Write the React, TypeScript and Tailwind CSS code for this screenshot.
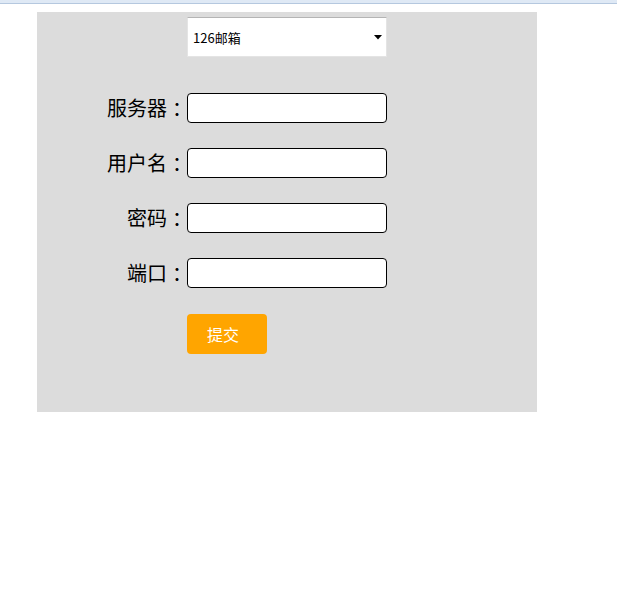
import React from "react";

const font = { fontFamily: '"Noto Sans CJK SC", "Noto Sans", sans-serif' };

function Row({ label }: { label: string }) {
  return (
    <div className="flex items-center h-[30px]">
      <div className="w-[150px] text-right text-[20px] leading-[30px] text-black whitespace-nowrap">
        {label}
        <span className="inline-block pl-[5px] mr-[-5px]">：</span>
      </div>
      <div className="w-[200px] h-[30px] bg-white border border-black rounded-[4px]" />
    </div>
  );
}

export default function App() {
  return (
    <div className="w-[617px] h-[611px] bg-white" style={font}>
      <div className="h-[4px] bg-[#dfe9f5] border-b border-[#b5c8df]" />
      <div className="ml-[37px] mt-[8px] w-[500px] h-[400px] bg-[#dcdcdc] pt-[5px]">
        <div className="ml-[150px] w-[200px] h-[40px] bg-white border border-[#e4e4e4] border-t-[#b4b4b4] flex items-center justify-between pl-[5px] pr-[4px]">
          <span className="text-[13px] text-black leading-none">126邮箱</span>
          <svg width="8" height="5" viewBox="0 0 8 5" className="mt-[1px]">
            <polygon points="0,0 8,0 4,4.5" fill="#000" />
          </svg>
        </div>
        <div className="flex flex-col gap-[25px] mt-[36px]">
          <Row label="服务器" />
          <Row label="用户名" />
          <Row label="密码" />
          <Row label="端口" />
        </div>
        <div className="ml-[150px] mt-[26px] w-[80px] h-[40px] bg-[#ffa500] rounded-[4px] flex items-center pl-[20px] text-white text-[16px]">
          提交
        </div>
      </div>
    </div>
  );
}
